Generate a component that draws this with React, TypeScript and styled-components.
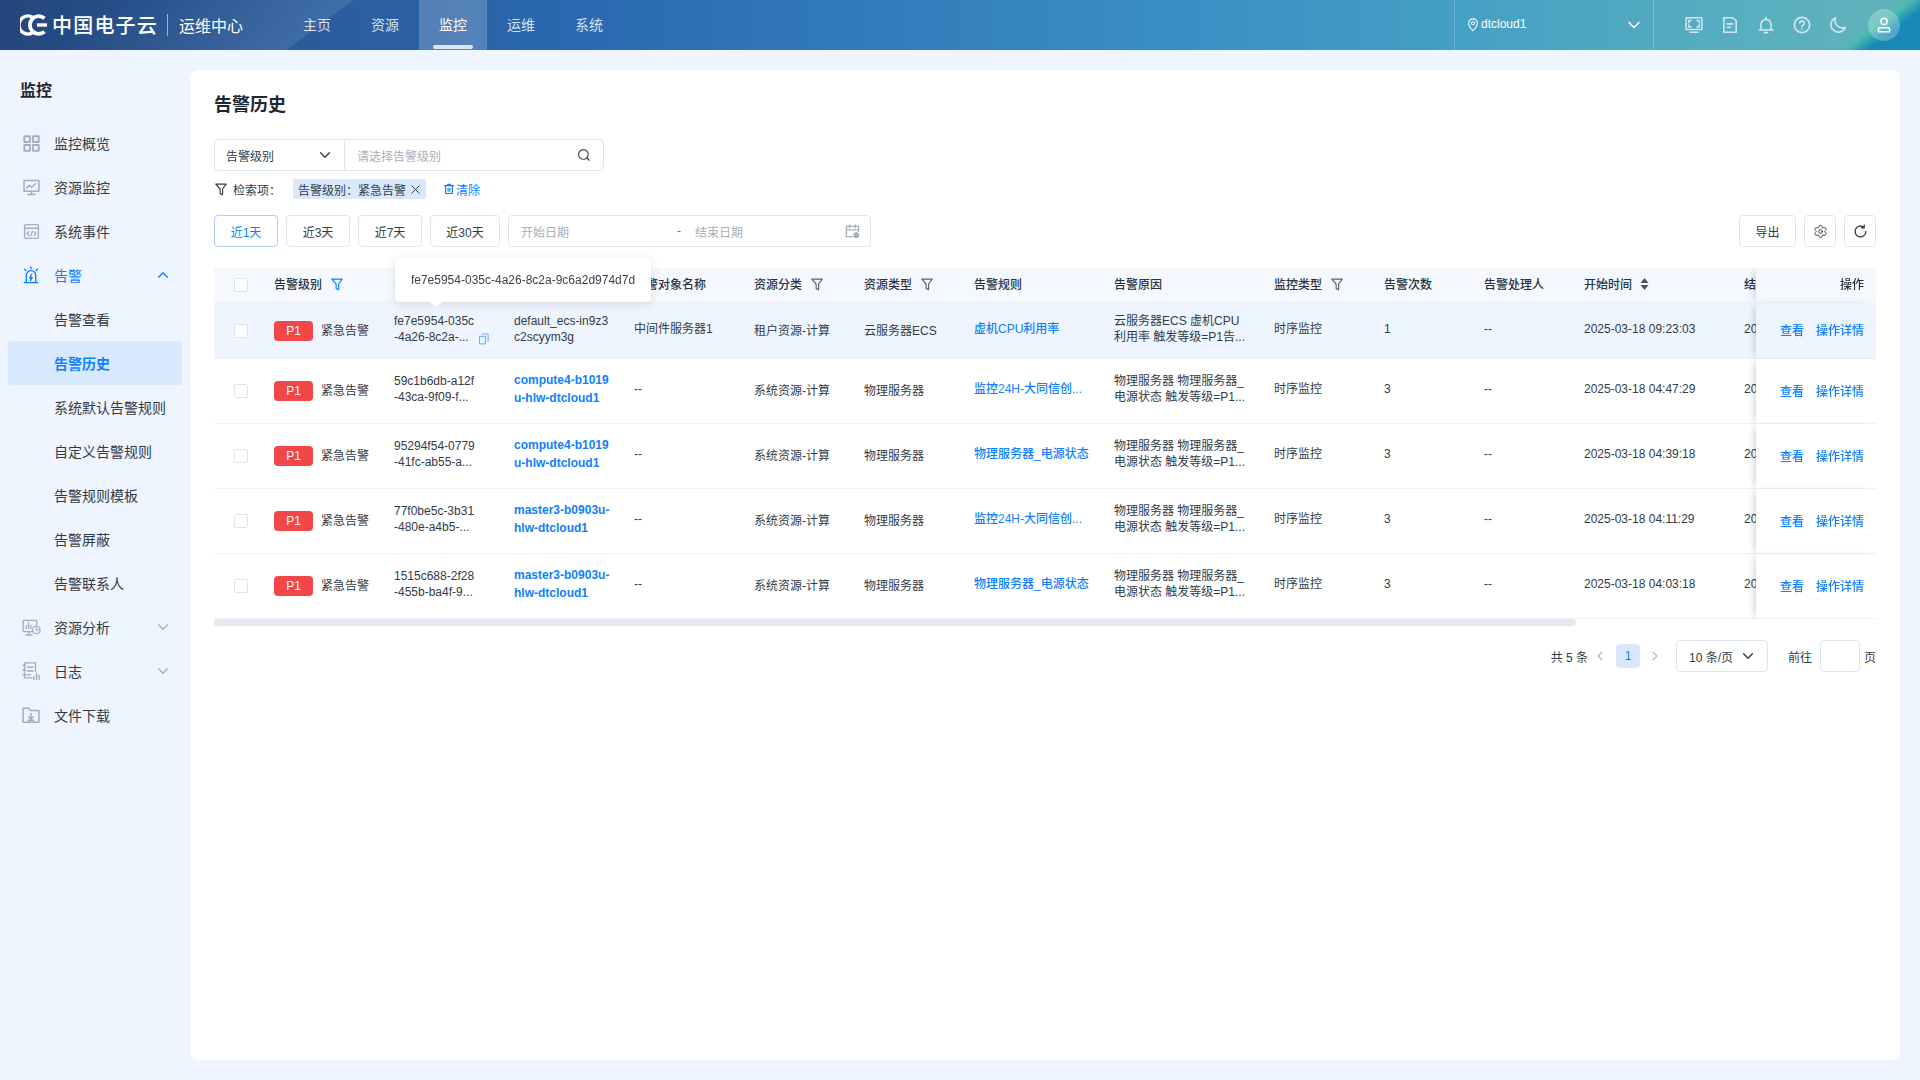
import React from 'react';
import styled, { createGlobalStyle } from 'styled-components';
import { Settings } from 'lucide-react';

const FONT = `"Liberation Sans", "Noto Sans CJK SC", sans-serif`;
const BLUE = '#0f7fff';
const TEXT = '#333b47';
const LINE = '#dfe5ee';

const Global = createGlobalStyle`
  * { box-sizing: border-box; }
  html, body { margin: 0; padding: 0; background: #eef5fe; }
  body { font-family: ${FONT}; font-size: 12px; color: ${TEXT}; }
`;

const Page = styled.div`
  width: 1920px;
  height: 1080px;
  display: flex;
  flex-direction: column;
  overflow: hidden;
  background: #eef5fe;
`;

/* ---------- top bar ---------- */
const TopBar = styled.header`
  height: 50px;
  flex: none;
  display: flex;
  align-items: stretch;
  color: #fff;
  background:
    linear-gradient(143.3deg, transparent 95.5%, #4db9b1 96.2%, #1888b8 97.4%),
    linear-gradient(143.3deg, transparent 6%, rgba(255, 255, 255, 0.1) 17.7%, transparent 17.9%),
    linear-gradient(90deg, #24467c 0%, #2a5e9f 18%, #2a69b0 30%, #3b8fc6 62%, #44a0c4 76%, #5aafbf 92%, #62b3ba 100%);
`;
const Brand = styled.div`
  width: 283px;
  flex: none;
  display: flex;
  align-items: center;
  padding-left: 20px;
`;
const BrandName = styled.span`
  font-size: 20px;
  font-weight: 500;
  letter-spacing: 1.2px;
  margin-left: 4px;
  padding-bottom: 1px;
  white-space: nowrap;
`;
const BrandRule = styled.span`
  width: 1px;
  height: 22px;
  background: rgba(255, 255, 255, 0.55);
  margin: 0 11px 0 9px;
`;
const BrandSub = styled.span`
  font-size: 16px;
  padding-bottom: 1px;
  white-space: nowrap;
`;
const Nav = styled.nav`
  display: flex;
  flex: 1;
`;
const NavItem = styled.a<{ $active?: boolean }>`
  position: relative;
  width: 68px;
  display: flex;
  align-items: center;
  justify-content: center;
  padding-bottom: 2px;
  font-size: 14px;
  color: ${(p) => (p.$active ? '#fff' : 'rgba(255,255,255,0.82)')};
  background: ${(p) => (p.$active ? 'rgba(255,255,255,0.2)' : 'transparent')};
  &::after {
    content: '';
    display: ${(p) => (p.$active ? 'block' : 'none')};
    position: absolute;
    left: 14px;
    right: 14px;
    bottom: 1px;
    height: 4px;
    border-radius: 2px;
    background: #dbe6f2;
  }
`;
const CloudPicker = styled.div`
  width: 200px;
  flex: none;
  display: flex;
  align-items: center;
  padding: 0 11px 0 11px;
  border-left: 1px solid rgba(255, 255, 255, 0.22);
  border-right: 1px solid rgba(255, 255, 255, 0.22);
`;
const CloudName = styled.span`
  font-size: 12px;
  margin: -3px auto 0 1px;
`;
const TopIcons = styled.div`
  width: 266px;
  flex: none;
  display: flex;
  align-items: center;
  padding-left: 31px;
  gap: 18px;
  color: #cfe7f5;
`;
const Avatar = styled.div`
  width: 32px;
  height: 32px;
  border-radius: 50%;
  margin-left: 3px;
  display: flex;
  align-items: center;
  justify-content: center;
  background: rgba(255, 255, 255, 0.25);
  color: #fff;
`;

/* ---------- body ---------- */
const Body = styled.div`
  flex: 1;
  display: flex;
  min-height: 0;
`;
const Sidebar = styled.aside`
  width: 190px;
  flex: none;
`;
const SideTitle = styled.h2`
  margin: 28px 0 17px 20px;
  font-size: 16px;
  line-height: 26px;
  font-weight: 700;
  color: #1f2733;
`;
const SideItem = styled.a<{ $sub?: boolean; $open?: boolean; $active?: boolean }>`
  height: 44px;
  width: 174px;
  margin-left: 8px;
  display: flex;
  align-items: center;
  gap: 15px;
  padding-left: ${(p) => (p.$sub ? '46px' : '15px')};
  font-size: 14px;
  border-radius: 4px;
  font-weight: ${(p) => (p.$active ? 700 : 400)};
  color: ${(p) => (p.$active || p.$open ? BLUE : TEXT)};
  background: ${(p) => (p.$active ? '#d8e8fd' : 'transparent')};
`;
const SideIcon = styled.span<{ $open?: boolean }>`
  width: 16px;
  flex: none;
  display: flex;
  justify-content: center;
  color: ${(p) => (p.$open ? BLUE : '#a3aec0')};
`;
const SideChevron = styled.span<{ $open?: boolean }>`
  display: flex;
  margin-left: auto;
  margin-right: 12px;
  color: ${(p) => (p.$open ? BLUE : '#a3aec0')};
`;

const Main = styled.main`
  flex: 1;
  padding: 20px 20px 20px 0;
  min-width: 0;
`;
const Card = styled.section`
  height: 100%;
  background: #fff;
  border-radius: 8px;
  padding: 23px 24px 0;
`;
const PageTitle = styled.h1`
  margin: 0 0 22px;
  font-size: 18px;
  line-height: 24px;
  font-weight: 700;
  color: #1f2733;
`;

const SearchGroup = styled.div`
  width: 390px;
  height: 32px;
  display: flex;
  border: 1px solid ${LINE};
  border-radius: 4px;
`;
const SearchSelect = styled.div`
  width: 130px;
  flex: none;
  display: flex;
  align-items: center;
  justify-content: space-between;
  padding: 0 12px 0 11px;
  border-right: 1px solid ${LINE};
  color: #333b47;
`;
const SearchInput = styled.div`
  flex: 1;
  display: flex;
  align-items: center;
  justify-content: space-between;
  padding: 0 12px;
  color: #a7afbc;
`;
const SearchGlyph = styled.span`
  display: flex;
  color: #3a424e;
`;
const FilterRow = styled.div`
  height: 20px;
  margin-top: 8px;
  display: flex;
  align-items: center;
`;
const FilterLabel = styled.span`
  margin-left: 5px;
  width: 60px;
  color: #333b47;
`;
const FilterTag = styled.span`
  width: 133px;
  height: 20px;
  padding: 0 5px;
  display: flex;
  align-items: center;
  justify-content: space-between;
  background: #d9e8fd;
  border-radius: 2px;
`;
const ClearLink = styled.a`
  display: flex;
  align-items: center;
  gap: 1px;
  margin-left: 17px;
  color: ${BLUE};
`;
const ToolRow = styled.div`
  margin-top: 16px;
  height: 32px;
  display: flex;
  gap: 8px;
`;
const Btn = styled.button<{ $w: number; $active?: boolean }>`
  width: ${(p) => p.$w}px;
  height: 32px;
  padding: 0;
  display: flex;
  align-items: center;
  justify-content: center;
  font: 12px ${FONT};
  background: #fff;
  border-radius: 4px;
  border: 1px solid ${(p) => (p.$active ? '#a9cefb' : LINE)};
  color: ${(p) => (p.$active ? BLUE : '#333b47')};
`;
const DateRange = styled.div`
  width: 363px;
  height: 32px;
  display: flex;
  align-items: center;
  padding: 0 10px 0 12px;
  border: 1px solid ${LINE};
  border-radius: 4px;
  color: #a7afbc;
`;
const DateStart = styled.span`
  width: 156px;
  flex: none;
`;
const DateDash = styled.span`
  width: 18px;
  flex: none;
  color: #606a78;
`;
const DateEnd = styled.span`
  flex: 1;
`;
const Spacer = styled.div`
  flex: 1;
`;

/* ---------- table ---------- */
const TableShell = styled.div`
  position: relative;
  margin-top: 21px;
`;
const Scroller = styled.div`
  overflow: hidden;
  width: 1662px;
`;
const Table = styled.table`
  width: 2028px;
  table-layout: fixed;
  border-collapse: separate;
  border-spacing: 0;
`;
const Row = styled.tr<{ $h: number; $hover?: boolean }>`
  height: ${(p) => p.$h}px;
  background: ${(p) => (p.$hover ? '#eef5fe' : '#fff')};
`;
const HeadRow = styled.tr`
  height: 35px;
  background: #f5f8fe;
`;
const Th = styled.th<{ $pad?: number; $flat?: boolean }>`
  padding: 0 0 ${(p) => (p.$flat ? 0 : 3)}px ${(p) => p.$pad ?? 12}px;
  text-align: left;
  font-size: 12px;
  font-weight: 500;
  color: #2a3240;
  white-space: nowrap;
  overflow: hidden;
  border-bottom: 1px solid #eef1f6;
`;
const HeadInner = styled.span`
  display: flex;
  align-items: center;
`;
const HeadIcon = styled.span<{ $gap: number; $active?: boolean }>`
  display: flex;
  margin-left: ${(p) => p.$gap}px;
  color: ${(p) => (p.$active ? BLUE : '#56616f')};
`;
const Td = styled.td<{ $up?: boolean; $pad?: number }>`
  padding: 0 0 ${(p) => (p.$up ? 4 : 0)}px ${(p) => p.$pad ?? 12}px;
  font-size: 12px;
  line-height: 16px;
  color: #333b47;
  white-space: nowrap;
  overflow: hidden;
  border-bottom: 1px solid #eef1f6;
`;
const FixedTh = styled(Th)`
  position: sticky;
  right: 0;
  padding-right: 12px;
  text-align: right;
  background: #f5f8fe;
  overflow: visible;
  box-shadow: -5px 0 7px -3px rgba(0, 0, 0, 0.16);
`;
const FixedTd = styled.td<{ $hover?: boolean }>`
  position: sticky;
  right: 0;
  padding: 0 12px 2px 0;
  text-align: right;
  white-space: nowrap;
  font-size: 12px;
  background: ${(p) => (p.$hover ? '#eef5fe' : '#fff')};
  border-bottom: 1px solid #eef1f6;
  box-shadow: -5px 0 7px -3px rgba(0, 0, 0, 0.16);
`;
const Check = styled.span`
  display: block;
  width: 14px;
  height: 14px;
  background: #fff;
  border: 1px solid #dfe4ec;
  border-radius: 2px;
`;
const LevelCell = styled.span`
  display: flex;
  align-items: center;
  gap: 8px;
`;
const P1 = styled.span`
  width: 39px;
  height: 20px;
  display: flex;
  align-items: center;
  justify-content: center;
  border-radius: 4px;
  background: #f24648;
  color: #fff;
  font-size: 12px;
`;
const IdWrap = styled.span`
  display: flex;
  align-items: flex-end;
`;
const CopyMark = styled.span`
  display: flex;
  margin-left: 4px;
  color: #5fa5f5;
`;
const ObjectLink = styled.a`
  display: block;
  color: ${BLUE};
  font-weight: 700;
  line-height: 18px;
`;
const RuleLink = styled.a`
  display: block;
  color: ${BLUE};
  font-weight: 500;
  line-height: 18px;
`;
const OpLink = styled.a`
  color: ${BLUE};
  font-weight: 500;
  margin-left: 12px;
`;
const Tip = styled.div`
  position: absolute;
  left: 181px;
  top: -10px;
  width: 256px;
  height: 44px;
  display: flex;
  align-items: center;
  justify-content: center;
  font-size: 12px;
  color: #3a424e;
  background: #fff;
  border-radius: 4px;
  box-shadow: 0 2px 10px rgba(40, 60, 90, 0.14);
  &::after {
    content: '';
    position: absolute;
    left: 35px;
    bottom: -5px;
    border-left: 6px solid transparent;
    border-right: 6px solid transparent;
    border-top: 5px solid #fff;
  }
`;
const ScrollTrack = styled.div`
  height: 7px;
  width: 1662px;
`;
const ScrollThumb = styled.div`
  height: 7px;
  border-radius: 4px;
  background: #e4e9f1;
`;

/* ---------- pager ---------- */
const Pager = styled.div`
  margin-top: 14px;
  height: 32px;
  display: flex;
  align-items: center;
  justify-content: flex-end;
  color: #333b47;
`;
const PagerArrow = styled.span<{ $l: number; $r: number }>`
  display: flex;
  margin: 0 ${(p) => p.$r}px 0 ${(p) => p.$l}px;
  color: #aab4c2;
`;
const PageNo = styled.span`
  width: 24px;
  height: 24px;
  display: flex;
  align-items: center;
  justify-content: center;
  border-radius: 4px;
  background: #d9e8fd;
  color: ${BLUE};
`;
const PageSize = styled.div`
  width: 92px;
  height: 32px;
  display: flex;
  align-items: center;
  justify-content: space-between;
  padding: 0 12px;
  border: 1px solid ${LINE};
  border-radius: 4px;
`;
const GotoLabel = styled.span`
  margin: 0 8px 0 20px;
`;
const GotoBox = styled.span`
  width: 40px;
  height: 32px;
  border: 1px solid ${LINE};
  border-radius: 4px;
  margin-right: 4px;
`;

/* ---------- icons ---------- */
type IP = { size?: number };
const Stroke = ({ size = 16, children, w = 1.4 }: IP & { children: React.ReactNode; w?: number }) => (
  <svg width={size} height={size} viewBox="0 0 16 16" fill="none" stroke="currentColor" strokeWidth={w} strokeLinecap="round" strokeLinejoin="round" style={{ flex: 'none' }}>
    {children}
  </svg>
);
const chevronPaths = {
  up: 'M3 10.5 8 5.5l5 5',
  down: 'M3 5.5 8 10.5l5-5',
  left: 'M10.5 3 5.5 8l5 5',
  right: 'M5.5 3l5 5-5 5',
};
const Chevron = ({ size = 14, dir = 'down' }: IP & { dir?: keyof typeof chevronPaths }) => (
  <Stroke size={size} w={1.5}>
    <path d={chevronPaths[dir]} />
  </Stroke>
);
const Funnel = ({ size = 14 }: IP) => (
  <Stroke size={size} w={1.3}>
    <path d="M2 2.5h12L9.8 8v6.5L7 13V8z" />
  </Stroke>
);
const Logo = () => (
  <svg width="28" height="22" viewBox="0 0 28 22" fill="none" stroke="#fff" strokeWidth="3.4" strokeLinecap="butt">
    <path d="M12.5 3.2A9 9 0 1 0 12.5 18.8" />
    <path d="M24.5 4.4A8.8 8.8 0 1 0 24.5 17.6" strokeWidth="3.8" />
    <path d="M17 11h10" strokeWidth="3.4" />
  </svg>
);
const TopScreen = () => (
  <Stroke size={18}>
    <rect x="1" y="1.5" width="14" height="10.5" />
    <path d="M3.5 6V4h2M10.5 4h2v2M3.5 7.8v2h2M12.5 7.8v2h-2M4.5 14.5h7" />
  </Stroke>
);
const TopDoc = () => (
  <Stroke size={18}>
    <path d="M2.5 1.5h8l3 3v10h-11zM5.5 7h5M5.5 10h3" />
  </Stroke>
);
const TopBell = () => (
  <Stroke size={18}>
    <path d="M2 12.5h12M3.5 12.5V7.5a4.5 4.5 0 0 1 9 0v5M8 1.3V3M6.5 14.8h3" />
  </Stroke>
);
const TopHelp = () => (
  <Stroke size={18}>
    <circle cx="8" cy="8" r="6.8" />
    <path d="M6 6.3a2 2 0 1 1 3 1.8c-.7.4-1 .8-1 1.6M8 11.8v.1" />
  </Stroke>
);
const TopMoon = () => (
  <Stroke size={18}>
    <path d="M6 1.5a6.6 6.6 0 1 0 8.5 8.5A6.4 6.4 0 0 1 6 1.5z" />
  </Stroke>
);
const UserIcon = () => (
  <Stroke size={18}>
    <circle cx="8" cy="4.8" r="2.8" />
    <path d="M3 14v-2.2c0-.8.6-1.4 1.4-1.4h7.2c.8 0 1.4.6 1.4 1.4V14z" />
  </Stroke>
);
const Pin = () => (
  <Stroke size={14} w={1.2}>
    <path d="M8 14.5S3 9.8 3 6a5 5 0 0 1 10 0c0 3.8-5 8.5-5 8.5z" />
    <circle cx="8" cy="6" r="1.8" />
  </Stroke>
);
const Sd = {
  grid: (
    <Stroke size={17} w={1.7}>
      <rect x="1.2" y="1.2" width="5.4" height="5.4" />
      <rect x="9.4" y="1.2" width="5.4" height="5.4" />
      <rect x="1.2" y="9.4" width="5.4" height="5.4" />
      <rect x="9.4" y="9.4" width="5.4" height="5.4" />
    </Stroke>
  ),
  monitor: (
    <Stroke size={17} w={1.4}>
      <rect x="1" y="1.5" width="14" height="10" />
      <path d="M3.5 8.5 6 6l2 1.8 3.8-3.6M8 11.5v3M4.5 14.5h7" />
    </Stroke>
  ),
  code: (
    <Stroke size={17} w={1.3}>
      <rect x="1.5" y="1.5" width="13" height="13" rx="1" />
      <path d="M1.5 5h13M5.4 8.2 3.8 10l1.6 1.8M10.6 8.2l1.6 1.8-1.6 1.8M8.8 8 7.2 12" />
    </Stroke>
  ),
  alarm: (
    <Stroke size={18} w={1.2}>
      <path d="M2 14.8h12M3.8 14.8V8.3a4.2 4.2 0 0 1 8.4 0v6.5M8.6 7.5 6.9 10.4h2.2l-1.6 2.6M8 .8v1.6M2.3 2.8l1.2 1.2M13.7 2.8l-1.2 1.2" />
    </Stroke>
  ),
  analysis: (
    <Stroke size={19} w={1.1}>
      <path d="M9.5 11.5H1V2h11.5v3.5M6 11.5v2.8M3.5 14.3h5M3.5 9V6.5M5.5 9V4M7.5 9V6" />
      <circle cx="12" cy="10" r="3.2" />
      <path d="M12 8.4V10h1.6" />
    </Stroke>
  ),
  log: (
    <Stroke size={20} w={1.1}>
      <path d="M2.8 13.5V1.5h8.8v7M2.8 13.5h6M1.5 3.5h2.4M1.5 7.2h2.4M1.5 11h2.4M5.2 5h4.4M5.2 8h4.4M5.2 11h2.4M10.3 14.8v-2.3M12.4 14.8V10M14.5 14.8V11.5" />
    </Stroke>
  ),
  folder: (
    <Stroke size={18} w={1.4}>
      <path d="M1 14.5V2h5l1.5 2H15v10.5zM8 6.8v4.5M6 9.6l2 2 2-2M5.5 12.8h5" />
    </Stroke>
  ),
};
const SearchMark = () => (
  <Stroke size={14} w={1.3}>
    <circle cx="7.3" cy="7.3" r="5.5" />
    <path d="m11.4 11.4 2.6 2.6" />
  </Stroke>
);
const Close = () => (
  <Stroke size={11} w={1.4}>
    <path d="m2.5 2.5 11 11M13.5 2.5l-11 11" />
  </Stroke>
);
const Trash = () => (
  <Stroke size={12} w={1.6}>
    <path d="M3.5 4v10h9V4M2 3.5h12M6 1.8h4M6.8 7v4M9.2 7v4" />
  </Stroke>
);
const Calendar = () => (
  <Stroke size={15} w={1.4}>
    <path d="M8 13.5H1.5v-11h13V8M1.5 6.2h13M5 1v3M11 1v3" />
    <circle cx="12" cy="12" r="2.4" fill="currentColor" />
  </Stroke>
);
const Refresh = () => (
  <Stroke size={15} w={1.4}>
    <path d="M13.8 8A5.8 5.8 0 1 1 11.8 3.6M12 1.2v2.8H9.2" />
  </Stroke>
);
const Copy = () => (
  <Stroke size={12} w={1.2}>
    <path d="M2.5 4.5h7.5v10H2.5zM5.5 1.5h8v10" />
  </Stroke>
);
const Sort = () => (
  <svg width="9" height="14" viewBox="0 0 9 14" fill="#4a5564">
    <path d="M4.5 1 8.5 6H.5zM4.5 13 .5 8h8z" />
  </svg>
);

/* ---------- data ---------- */
type SideEntry = { label: string; icon?: React.ReactNode; sub?: boolean; open?: boolean; active?: boolean; chev?: 'up' | 'down' };
const side: SideEntry[] = [
  { label: '监控概览', icon: Sd.grid },
  { label: '资源监控', icon: Sd.monitor },
  { label: '系统事件', icon: Sd.code },
  { label: '告警', icon: Sd.alarm, open: true, chev: 'up' },
  { label: '告警查看', sub: true },
  { label: '告警历史', sub: true, active: true },
  { label: '系统默认告警规则', sub: true },
  { label: '自定义告警规则', sub: true },
  { label: '告警规则模板', sub: true },
  { label: '告警屏蔽', sub: true },
  { label: '告警联系人', sub: true },
  { label: '资源分析', icon: Sd.analysis, chev: 'down' },
  { label: '日志', icon: Sd.log, chev: 'down' },
  { label: '文件下载', icon: Sd.folder },
];

type RowData = {
  id: [string, string];
  obj: [string, string];
  objLink: boolean;
  name: string;
  cat: string;
  type: string;
  rule: string;
  reason: [string, string];
  count: string;
  start: string;
  end: string;
};
const rows: RowData[] = [
  {
    id: ['fe7e5954-035c', '-4a26-8c2a-...'],
    obj: ['default_ecs-in9z3', 'c2scyym3g'],
    objLink: false,
    name: '中间件服务器1',
    cat: '租户资源-计算',
    type: '云服务器ECS',
    rule: '虚机CPU利用率',
    reason: ['云服务器ECS 虚机CPU', '利用率 触发等级=P1告...'],
    count: '1',
    start: '2025-03-18 09:23:03',
    end: '2025-03-18 09:28:03',
  },
  {
    id: ['59c1b6db-a12f', '-43ca-9f09-f...'],
    obj: ['compute4-b1019', 'u-hlw-dtcloud1'],
    objLink: true,
    name: '--',
    cat: '系统资源-计算',
    type: '物理服务器',
    rule: '监控24H-大同信创...',
    reason: ['物理服务器 物理服务器_', '电源状态 触发等级=P1...'],
    count: '3',
    start: '2025-03-18 04:47:29',
    end: '2025-03-18 04:57:29',
  },
  {
    id: ['95294f54-0779', '-41fc-ab55-a...'],
    obj: ['compute4-b1019', 'u-hlw-dtcloud1'],
    objLink: true,
    name: '--',
    cat: '系统资源-计算',
    type: '物理服务器',
    rule: '物理服务器_电源状态',
    reason: ['物理服务器 物理服务器_', '电源状态 触发等级=P1...'],
    count: '3',
    start: '2025-03-18 04:39:18',
    end: '2025-03-18 04:49:18',
  },
  {
    id: ['77f0be5c-3b31', '-480e-a4b5-...'],
    obj: ['master3-b0903u-', 'hlw-dtcloud1'],
    objLink: true,
    name: '--',
    cat: '系统资源-计算',
    type: '物理服务器',
    rule: '监控24H-大同信创...',
    reason: ['物理服务器 物理服务器_', '电源状态 触发等级=P1...'],
    count: '3',
    start: '2025-03-18 04:11:29',
    end: '2025-03-18 04:21:29',
  },
  {
    id: ['1515c688-2f28', '-455b-ba4f-9...'],
    obj: ['master3-b0903u-', 'hlw-dtcloud1'],
    objLink: true,
    name: '--',
    cat: '系统资源-计算',
    type: '物理服务器',
    rule: '物理服务器_电源状态',
    reason: ['物理服务器 物理服务器_', '电源状态 触发等级=P1...'],
    count: '3',
    start: '2025-03-18 04:03:18',
    end: '2025-03-18 04:13:18',
  },
];
const widths = [48, 120, 120, 120, 120, 110, 110, 140, 160, 110, 100, 100, 160, 160, 110, 120, 120];
const TwoLines = ({ lines }: { lines: [string, string] }) => (
  <>
    {lines[0]}
    <br />
    {lines[1]}
  </>
);

export default function App() {
  return (
    <Page>
      <Global />
      <TopBar>
        <Brand>
          <Logo />
          <BrandName>中国电子云</BrandName>
          <BrandRule />
          <BrandSub>运维中心</BrandSub>
        </Brand>
        <Nav>
          {['主页', '资源', '监控', '运维', '系统'].map((t) => (
            <NavItem key={t} $active={t === '监控'}>
              {t}
            </NavItem>
          ))}
        </Nav>
        <CloudPicker>
          <Pin />
          <CloudName>dtcloud1</CloudName>
          <Chevron size={16} />
        </CloudPicker>
        <TopIcons>
          <TopScreen />
          <TopDoc />
          <TopBell />
          <TopHelp />
          <TopMoon />
          <Avatar>
            <UserIcon />
          </Avatar>
        </TopIcons>
      </TopBar>
      <Body>
        <Sidebar>
          <SideTitle>监控</SideTitle>
          {side.map((s) => (
            <SideItem key={s.label} $sub={s.sub} $open={s.open} $active={s.active}>
              {s.icon && <SideIcon $open={s.open}>{s.icon}</SideIcon>}
              {s.label}
              {s.chev && (
                <SideChevron $open={s.open}>
                  <Chevron size={14} dir={s.chev} />
                </SideChevron>
              )}
            </SideItem>
          ))}
        </Sidebar>
        <Main>
          <Card>
            <PageTitle>告警历史</PageTitle>
            <SearchGroup>
              <SearchSelect>
                告警级别
                <Chevron size={14} />
              </SearchSelect>
              <SearchInput>
                请选择告警级别
                <SearchGlyph>
                  <SearchMark />
                </SearchGlyph>
              </SearchInput>
            </SearchGroup>
            <FilterRow>
              <Funnel size={14} />
              <FilterLabel>检索项：</FilterLabel>
              <FilterTag>
                告警级别：紧急告警
                <Close />
              </FilterTag>
              <ClearLink>
                <Trash />
                清除
              </ClearLink>
            </FilterRow>
            <ToolRow>
              <Btn $w={64} $active>
                近1天
              </Btn>
              <Btn $w={64}>近3天</Btn>
              <Btn $w={64}>近7天</Btn>
              <Btn $w={70}>近30天</Btn>
              <DateRange>
                <DateStart>开始日期</DateStart>
                <DateDash>-</DateDash>
                <DateEnd>结束日期</DateEnd>
                <Calendar />
              </DateRange>
              <Spacer />
              <Btn $w={57}>导出</Btn>
              <Btn $w={32}>
                <Settings size={15} strokeWidth={1.5} />
              </Btn>
              <Btn $w={32}>
                <Refresh />
              </Btn>
            </ToolRow>
            <TableShell>
              <Scroller>
                <Table>
                  <colgroup>
                    {widths.map((w, i) => (
                      <col key={i} width={w} />
                    ))}
                  </colgroup>
                  <thead>
                    <HeadRow>
                      <Th $pad={20} $flat>
                        <Check />
                      </Th>
                      <Th>
                        <HeadInner>
                          告警级别
                          <HeadIcon $gap={8} $active>
                            <Funnel />
                          </HeadIcon>
                        </HeadInner>
                      </Th>
                      <Th>告警ID</Th>
                      <Th>告警对象</Th>
                      <Th>告警对象名称</Th>
                      <Th>
                        <HeadInner>
                          资源分类
                          <HeadIcon $gap={8}>
                            <Funnel />
                          </HeadIcon>
                        </HeadInner>
                      </Th>
                      <Th>
                        <HeadInner>
                          资源类型
                          <HeadIcon $gap={8}>
                            <Funnel />
                          </HeadIcon>
                        </HeadInner>
                      </Th>
                      <Th>告警规则</Th>
                      <Th>告警原因</Th>
                      <Th>
                        <HeadInner>
                          监控类型
                          <HeadIcon $gap={8}>
                            <Funnel />
                          </HeadIcon>
                        </HeadInner>
                      </Th>
                      <Th>告警次数</Th>
                      <Th>告警处理人</Th>
                      <Th>
                        <HeadInner>
                          开始时间
                          <HeadIcon $gap={8}>
                            <Sort />
                          </HeadIcon>
                        </HeadInner>
                      </Th>
                      <Th>结束时间</Th>
                      <Th>持续时长</Th>
                      <Th>处理状态</Th>
                      <FixedTh>操作</FixedTh>
                    </HeadRow>
                  </thead>
                  <tbody>
                    {rows.map((r, i) => (
                      <Row key={r.id[0]} $h={i === 0 ? 56 : 65} $hover={i === 0}>
                        <Td $pad={20}>
                          <Check />
                        </Td>
                        <Td>
                          <LevelCell>
                            <P1>P1</P1>
                            紧急告警
                          </LevelCell>
                        </Td>
                        <Td $up>
                          <IdWrap>
                            <span>
                              <TwoLines lines={r.id} />
                            </span>
                            {i === 0 && (
                              <CopyMark>
                                <Copy />
                              </CopyMark>
                            )}
                          </IdWrap>
                        </Td>
                        <Td $up>
                          {r.objLink ? (
                            <>
                              <ObjectLink>{r.obj[0]}</ObjectLink>
                              <ObjectLink>{r.obj[1]}</ObjectLink>
                            </>
                          ) : (
                            <TwoLines lines={r.obj} />
                          )}
                        </Td>
                        <Td $up>{r.name}</Td>
                        <Td>{r.cat}</Td>
                        <Td>{r.type}</Td>
                        <Td $up>
                          <RuleLink>{r.rule}</RuleLink>
                        </Td>
                        <Td $up>
                          <TwoLines lines={r.reason} />
                        </Td>
                        <Td $up>时序监控</Td>
                        <Td $up>{r.count}</Td>
                        <Td $up>--</Td>
                        <Td $up>{r.start}</Td>
                        <Td $up>{r.end}</Td>
                        <Td $up>5分钟</Td>
                        <Td $up>已恢复</Td>
                        <FixedTd $hover={i === 0}>
                          <OpLink>查看</OpLink>
                          <OpLink>操作详情</OpLink>
                        </FixedTd>
                      </Row>
                    ))}
                  </tbody>
                </Table>
              </Scroller>
              <ScrollTrack>
                <ScrollThumb style={{ width: `${(1662 / 2028) * 100}%` }} />
              </ScrollTrack>
              <Tip>fe7e5954-035c-4a26-8c2a-9c6a2d974d7d</Tip>
            </TableShell>
            <Pager>
              <span>共 5 条</span>
              <PagerArrow $l={6} $r={10}>
                <Chevron size={12} dir="left" />
              </PagerArrow>
              <PageNo>1</PageNo>
              <PagerArrow $l={9} $r={15}>
                <Chevron size={12} dir="right" />
              </PagerArrow>
              <PageSize>
                10 条/页
                <Chevron size={14} />
              </PageSize>
              <GotoLabel>前往</GotoLabel>
              <GotoBox />
              <span>页</span>
            </Pager>
          </Card>
        </Main>
      </Body>
    </Page>
  );
}
